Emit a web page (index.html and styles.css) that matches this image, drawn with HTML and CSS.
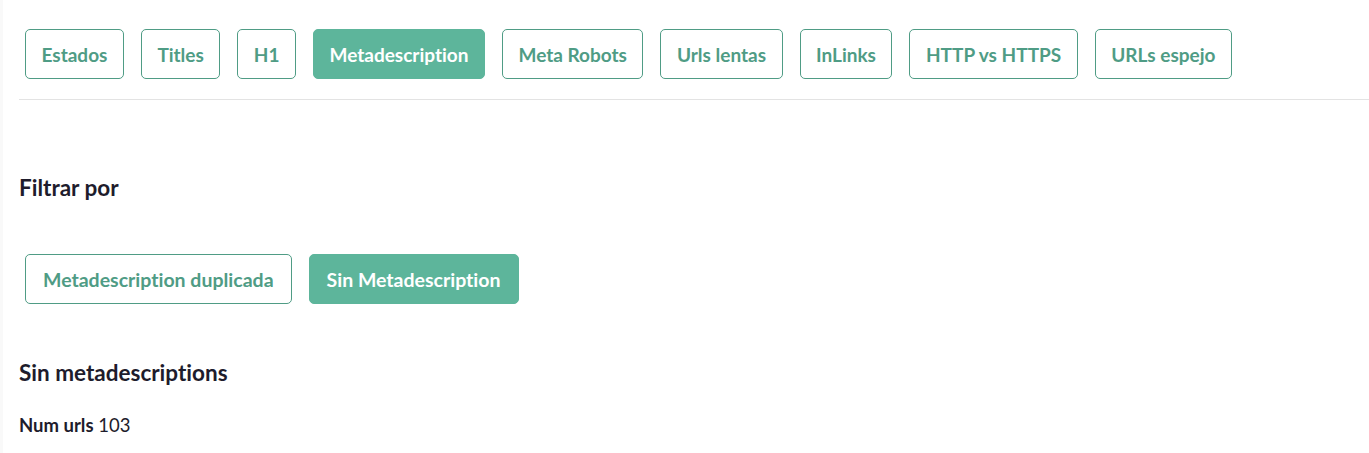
FILE: index.html
```html
<!DOCTYPE html>
<html lang="es">
<head>
<meta charset="utf-8">
<title>Metadescription</title>
<link rel="stylesheet" href="styles.css">
</head>
<body>
<div class="page">
  <nav class="tabs">
    <a class="btn">Estados</a>
    <a class="btn">Titles</a>
    <a class="btn">H1</a>
    <a class="btn active">Metadescription</a>
    <a class="btn">Meta Robots</a>
    <a class="btn">Urls lentas</a>
    <a class="btn">InLinks</a>
    <a class="btn">HTTP vs HTTPS</a>
    <a class="btn">URLs espejo</a>
  </nav>
  <section class="content">
    <h3 class="filter-title">Filtrar por</h3>
    <div class="filters">
      <a class="btn">Metadescription duplicada</a>
      <a class="btn active">Sin Metadescription</a>
    </div>
    <h3 class="result-title">Sin metadescriptions</h3>
    <p class="count"><strong>Num urls</strong> 103</p>
  </section>
</div>
</body>
</html>
```
FILE: styles.css
```css
html, body {
  margin: 0;
  padding: 0;
  background: #fff;
}
body {
  font-family: "Lato", "Liberation Sans", sans-serif;
  font-variant-ligatures: none;
  color: #1e1c2c;
  border-left: 3px solid #f9f9f9;
  min-height: 453px;
  box-sizing: border-box;
}
.page {
  padding-left: 16px;
  padding-top: 29px;
}
.tabs {
  display: flex;
  gap: 17px;
  padding-left: 6px;
  padding-bottom: 20px;
  border-bottom: 1px solid #e3e3e3;
}
.btn {
  display: inline-flex;
  align-items: center;
  height: 50px;
  box-sizing: border-box;
  padding: 0 16px;
  border: 1px solid #4f9c85;
  border-radius: 5px;
  color: #4f9c85;
  font-weight: 700;
  font-size: 19px;
  background: #fff;
  white-space: nowrap;
}
.tabs .btn {
  padding: 0 15.5px;
}
.filters .btn {
  padding: 0 17px;
  font-size: 19.5px;
}
.btn.active {
  background: #5db59b;
  border-color: #5db59b;
  color: #fff;
}
.content {
  padding-top: 74px;
}
.filter-title, .result-title {
  margin: 0;
  font-size: 22.5px;
  font-weight: 700;
  line-height: 28px;
}
.filters {
  display: flex;
  gap: 17px;
  padding-left: 6px;
  margin-top: 52px;
}
.result-title {
  margin-top: 55px;
}
.count {
  margin: 27px 0 0;
  font-size: 18.5px;
  line-height: 22px;
}
.count strong {
  font-weight: 700;
}
```
